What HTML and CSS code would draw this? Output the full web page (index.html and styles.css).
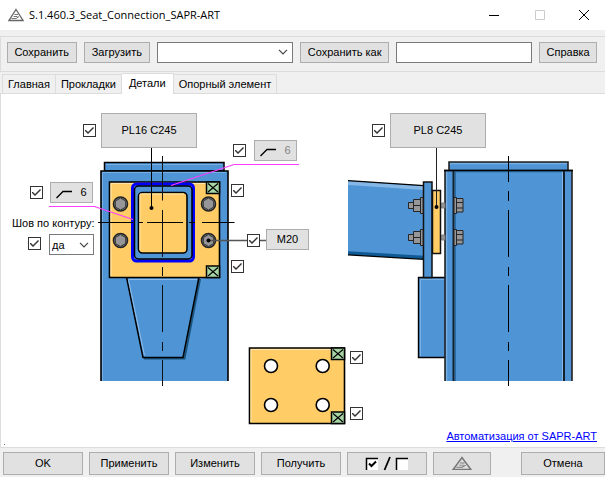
FILE: index.html
```html
<!DOCTYPE html>
<html lang="ru">
<head>
<meta charset="utf-8">
<title>S.1.460.3_Seat_Connection_SAPR-ART</title>
<link rel="stylesheet" href="styles.css">
</head>
<body>
<svg class="defs" aria-hidden="true">
  <symbol id="logo" viewBox="0 0 16 14">
    <path d="M8 1.5 15 12.5H1Z" fill="none" stroke="currentColor" stroke-width="1.3"/>
    <path d="M6.500 6.500H10M9.500 8.500H5.500M3.500 10.500H8L11 8.500" fill="none" stroke="currentColor" stroke-width=".9"/>
  </symbol>
  <symbol id="chevron" viewBox="0 0 10 6">
    <path d="M1 .8 5 4.8 9 .8" fill="none" stroke="currentColor" stroke-width="1.2"/>
  </symbol>
  <symbol id="weld" viewBox="0 0 16 9">
    <path d="M.5 8 7 1.5H16" fill="none" stroke="#000" stroke-width="1.3"/>
  </symbol>
</svg>
<div class="window">
  <header class="titlebar">
    <svg class="logo"><use href="#logo"/></svg>
    <h1 class="title">S.1.460.3_Seat_Connection_SAPR-ART</h1>
    <div class="caption">
      <button class="cap" aria-label="Свернуть"><svg viewBox="0 0 10 10"><path d="M0 5.5H10" stroke="#000"/></svg></button>
      <button class="cap" aria-label="Развернуть" disabled><svg viewBox="0 0 10 10"><path d="M.5.5H9.5V9.5H.5Z" fill="none" stroke="#ccc"/></svg></button>
      <button class="cap" aria-label="Закрыть"><svg viewBox="0 0 10 10"><path d="M0 0 10 10M10 0 0 10" stroke="#000"/></svg></button>
    </div>
  </header>

  <div class="toolbar">
    <button class="btn">Сохранить</button>
    <button class="btn load">Загрузить</button>
    <div class="combo field"><select aria-label="Настройки"><option></option></select><svg><use href="#chevron"/></svg></div>
    <button class="btn wide">Сохранить как</button>
    <input class="field text" type="text" aria-label="Имя файла">
    <button class="btn help">Справка</button>
  </div>

  <nav class="tabs" role="tablist">
    <button class="tab" role="tab">Главная</button>
    <button class="tab" role="tab">Прокладки</button>
    <button class="tab active" role="tab" aria-selected="true">Детали</button>
    <button class="tab" role="tab">Опорный элемент</button>
  </nav>

  <main class="stage">
    <svg class="drawing" viewBox="0 94 605 353" aria-hidden="true">
      <defs>
        <g id="bolt">
          <circle r="7" fill="#858585" stroke="#252525" stroke-width="1.6"/>
          <path d="M0-6 5.2-3V3L0 6-5.2 3V-3Z" fill="#969698" stroke="#333"/>
        </g>
        <g id="mark">
          <path d="M0 0H13V11.500H0Z" fill="#a6d6a6" stroke="#000" stroke-width="1.5"/>
          <path d="M1.500 1.500 11.500 10M11.500 1.500 1.500 10" stroke="#000" stroke-width="1.2"/>
        </g>
        <g id="sidebolt" fill="#969698" stroke="#252525">
          <path d="M408.500-3H414V3H408.500Z"/>
          <path d="M413.500-6H420.500V6H413.500ZM413.500 0H420.500"/>
          <path d="M420.500-8H423V8H420.500Z"/>
          <path d="M441.500-2.500H445V2.500H441.500Z" stroke="#777"/>
          <path d="M454-8H456.500V8H454Z"/>
          <path d="M456.500-7H463V6.500H456.500ZM456.500-3H463M456.500 2.500H463"/>
        </g>
      </defs>

      <!-- front view: column -->
      <path d="M104.500 171V162.500H224V171Z" fill="#4f94d4" stroke="#000" stroke-width="1.5"/>
      <path d="M106 164.500H222" stroke="#79b0e4"/>
      <path d="M101 381V171H228V381" fill="#4f94d4" stroke="#000" stroke-width="1.6"/>
      <path d="M102.500 381V172.500H226" fill="none" stroke="#79b0e4"/>
      <!-- seat bracket -->
      <path d="M200 279 184.500 358.500H144" fill="none" stroke="#1b557f" stroke-width="2"/>
      <path d="M126.500 277 143 357.500H183L199 277" fill="#4f94d4" stroke="#000" stroke-width="1.5"/>
      <path d="M128.500 279.500H197M128.500 280 144.500 355.500" fill="none" stroke="#8fbdea"/>
      <!-- face plate -->
      <path d="M109.500 182H219.500V277.500H109.500Z" fill="#ffcc66" stroke="#000" stroke-width="1.6"/>
      <path d="M111 276V183.500H206" fill="none" stroke="#ffe6b0"/>
      <rect x="132.500" y="184" width="61" height="77" rx="4" fill="#4f94d4" stroke="#00f" stroke-width="3"/>
      <rect x="134.500" y="186" width="57.500" height="73" rx="4" fill="#4f94d4" stroke="#000" stroke-width="1.500"/>
      <rect x="138.500" y="192.500" width="48.500" height="60.500" rx="4" fill="#ffcc66" stroke="#000" stroke-width="1.600"/>
      <path d="M140 250V194H184" fill="none" stroke="#ffe6b0"/>
      <use href="#bolt" x="120.500" y="204"/><use href="#bolt" x="208.500" y="204"/>
      <use href="#bolt" x="120.500" y="240.500"/><use href="#bolt" x="208.500" y="240.500"/>
      <use href="#mark" x="206.500" y="182"/><use href="#mark" x="206.500" y="266"/>
      <!-- axes and leaders -->
      <path d="M162.500 156V200.500M162.500 210V257M162.500 267V276M162.500 285V332M162.500 342V351M162.500 360V386" stroke="#111"/>
      <path d="M98 222.500H133M138 222.500H143M147 222.500H183M189 222.500H195M202 222.500H234.500" stroke="#000"/>
      <path d="M151.500 148V208" stroke="#000"/><circle cx="151.500" cy="208" r="2"/>
      <path d="M208 240.500H267" stroke="#555" stroke-width="1.500"/><circle cx="208.500" cy="240.500" r="2"/>
      <path d="M171 185.500 234 164.500H299M49 206.500H94.500L133 219.500" fill="none" stroke="#ff3cff" stroke-width="1.200"/>

      <!-- loose plate -->
      <path d="M249.500 348H344.500V423.500H249.500Z" fill="#ffcc66" stroke="#000" stroke-width="1.600"/>
      <path d="M251 422V349.500H331" fill="none" stroke="#ffe6b0"/>
      <g fill="#fff" stroke="#000" stroke-width="1.600">
        <circle cx="271" cy="366" r="6.500"/><circle cx="322.700" cy="366" r="6.500"/>
        <circle cx="271" cy="405" r="6.500"/><circle cx="322.700" cy="405" r="6.500"/>
      </g>
      <use href="#mark" x="331.500" y="348"/><use href="#mark" x="331.500" y="412"/>

      <!-- side view: beam -->
      <path d="M348 180.500 424 185.500V259L348 254.500Z" fill="#4f94d4"/>
      <path d="M348 183 424 188" stroke="#84b6e6" stroke-width="4"/>
      <path d="M348 253 424 257.500" stroke="#0f5a94" stroke-width="3.500"/>
      <path d="M348 180.700 424 185.700M348 254.800 424 259.300" stroke="#000" stroke-width="1.200"/>
      <!-- seat block -->
      <path d="M418.500 277.500H446V357.500H418.500Z" fill="#4f94d4" stroke="#000" stroke-width="1.400"/>
      <path d="M420.500 356V279.500H445" fill="none" stroke="#79b0e4"/>
      <!-- column -->
      <path d="M449 171V162H568V171" fill="#4f94d4" stroke="#222" stroke-width="1.600"/>
      <path d="M450 163.700H567" stroke="#84b6e6"/>
      <path d="M445 381V170.500H572V381" fill="#4f94d4" stroke="#222" stroke-width="1.600"/>
      <path d="M444 170.500H573" stroke="#000" stroke-width="1.400"/>
      <path d="M454 171.700H563" stroke="#1b557f"/>
      <path d="M446.700 172V381M562.500 172V381" stroke="#84b6e6"/>
      <path d="M455.500 172V381" stroke="#2a6da6"/>
      <path d="M453.500 171V381M564 171V381" stroke="#14202c" stroke-width="2"/>
      <!-- end plate and shim -->
      <path d="M423.500 277.500V182H432V277.500Z" fill="#4f94d4" stroke="#111" stroke-width="1.500"/>
      <path d="M432.500 190.500H440.500V253.500H432.500Z" fill="#ffcc66" stroke="#111" stroke-width="1.500"/>
      <use href="#sidebolt" y="205.500"/><use href="#sidebolt" y="237.500"/>
      <path d="M436.500 148V207" stroke="#222"/><circle cx="436.500" cy="207" r="2"/>
      <path d="M508.500 156V182M508.500 191V201M508.500 210V257M508.500 267V276M508.500 285V332M508.500 342V351M508.500 360V386" stroke="#000"/>
      <path d="M4 444.500H5" stroke="#777"/>
    </svg>

    <input class="pin check c-pl16" type="checkbox" checked aria-label="PL16 C245">
    <button class="pin btn part b-pl16">PL16 C245</button>
    <input class="pin check c-weld-r" type="checkbox" checked aria-label="Шов 6">
    <button class="pin btn weld b-weld-r" disabled><svg><use href="#weld"/></svg>6</button>
    <input class="pin check c-weld-l" type="checkbox" checked aria-label="Шов 6">
    <button class="pin btn weld b-weld-l"><svg><use href="#weld"/></svg>6</button>
    <label class="pin l-seam" for="seam">Шов по контуру:</label>
    <input class="pin check c-seam" type="checkbox" checked aria-label="Шов по контуру">
    <div class="pin combo field s-seam"><select id="seam"><option>да</option><option>нет</option></select><svg><use href="#chevron"/></svg></div>
    <input class="pin check c-top" type="checkbox" checked aria-label="Верхний угол">
    <input class="pin check c-m20" type="checkbox" checked aria-label="M20">
    <button class="pin btn small b-m20">M20</button>
    <input class="pin check c-bottom" type="checkbox" checked aria-label="Нижний угол">
    <input class="pin check c-pl8" type="checkbox" checked aria-label="PL8 C245">
    <button class="pin btn part b-pl8">PL8 C245</button>
    <input class="pin check c-plate-t" type="checkbox" checked aria-label="Верхний угол прокладки">
    <input class="pin check c-plate-b" type="checkbox" checked aria-label="Нижний угол прокладки">
    <a class="link" href="#">Автоматизация от SAPR-ART</a>
  </main>

  <footer class="actions">
    <button class="btn">OK</button>
    <button class="btn">Применить</button>
    <button class="btn">Изменить</button>
    <button class="btn">Получить</button>
    <button class="btn" aria-label="Переключить флажки">
      <svg class="toggle" viewBox="0 0 44 15">
        <path d="M2 3H13V14H2Z" fill="#fff"/><path d="M1.500 14V2.500H13" fill="none" stroke="#000" stroke-width="1.500"/>
        <path d="M4 7.500 6.500 10 11 5.500" fill="none" stroke="#000" stroke-width="2"/>
        <path d="M19.500 14 25 1" stroke="#000" stroke-width="1.800"/>
        <path d="M32 3H43V14H32Z" fill="#fff"/><path d="M31.500 14V2.500H43" fill="none" stroke="#000" stroke-width="1.500"/>
      </svg>
    </button>
    <button class="btn brand" aria-label="SAPR-ART"><svg viewBox="0 0 16 14" preserveAspectRatio="none"><use href="#logo"/></svg></button>
    <button class="btn cancel">Отмена</button>
  </footer>
</div>
</body>
</html>
```

FILE: styles.css
```css
* { box-sizing: border-box; }

body {
  margin: 0;
  background: #f0f0f0;
  color: #000;
  font: 11px/14px "Liberation Sans", Arial, sans-serif;
}

button, input, select { font: inherit; color: inherit; }

.defs { position: absolute; width: 0; height: 0; }

.window {
  display: flex;
  flex-direction: column;
  min-height: 100vh;
}

/* Title bar */
.titlebar {
  display: flex;
  align-items: center;
  height: 30px;
  padding-left: 8px;
  background: #fff;
}
.logo { width: 16px; height: 14px; color: #666; }
.title {
  flex: 1;
  margin: 0 0 0 5px;
  font: 11px/16px "Open Sans", "Segoe UI", sans-serif;
}
.caption { display: flex; }
.cap {
  display: grid;
  place-items: center;
  width: 46px;
  height: 28px;
  padding: 0;
  border: 0;
  background: none;
}
.cap:last-child { width: 42px; }
.cap svg { width: 10px; height: 10px; }

/* Shared controls */
.btn {
  display: flex;
  align-items: center;
  justify-content: center;
  height: 21px;
  padding: 0 0 1px;
  border: 1px solid #adadad;
  background: #e1e1e1;
  white-space: nowrap;
}
.btn:disabled { color: #838383; }
.field {
  height: 21px;
  border: 1px solid #7a7a7a;
  background: #fff;
}
.combo { display: flex; align-items: center; position: relative; }
.combo select {
  appearance: none;
  width: 100%;
  height: 100%;
  padding: 0 16px 0 2px;
  border: 0;
  background: none;
}
.combo svg {
  position: absolute;
  right: 4px;
  width: 10px;
  height: 6px;
  color: #444;
  pointer-events: none;
}
.check {
  appearance: none;
  width: 13px;
  height: 13px;
  margin: 0;
  border: 1px solid #333;
  background: #fff;
}
.check:checked::before {
  content: "";
  display: block;
  width: 11px;
  height: 11px;
  background: #333;
  clip-path: polygon(1px 5px, 2px 5px, 4px 7px, 9px 2px, 10px 3px, 4px 9px, 1px 6px);
}

/* Toolbar */
.toolbar {
  display: flex;
  align-items: center;
  gap: 7px;
  height: 36px;
  margin-top: 6px;
  padding: 0 8px 4px 6px;
  border: 1px solid #dcdcdc;
  border-right: 0;
}
.toolbar .btn { flex: 69 1 0; }
.toolbar .field { flex: 137 1 0; min-width: 0; padding: 0; }
.toolbar .load { flex-grow: 66; }
.toolbar .wide { flex-grow: 89; }
.toolbar .help { flex-grow: 57; }

/* Tabs */
.tabs {
  display: flex;
  align-items: flex-end;
  height: 22px;
  padding-left: 2px;
  border-bottom: 1px solid #dcdcdc;
}
.tab {
  height: 19px;
  padding: 0 5px;
  border: 1px solid #dcdcdc;
  border-width: 1px 1px 0 0;
  background: #f0f0f0;
}
.tab:first-child { border-left-width: 1px; }
.tab.active {
  height: 21px;
  margin-bottom: -1px;
  padding: 0 7px 2px;
  background: #fff;
}

/* Drawing sheet */
.stage {
  position: relative;
  flex: 1;
  border-bottom: 1px solid #dcdcdc;
  background: #fff;
  box-shadow: inset 1px 0 #dcdcdc;
}
.drawing { display: block; width: 605px; height: 353px; }
.pin { position: absolute; }
.part { width: 96px; height: 35px; }
.weld { gap: 8px; width: 43px; }
.weld svg { width: 16px; height: 9px; margin-top: 5px; }
.small { width: 43px; }

.c-pl16 { left: 83px; top: 30px; }
.b-pl16 { left: 101px; top: 19px; }
.c-weld-r { left: 233px; top: 50px; }
.b-weld-r { left: 254px; top: 46px; }
.c-weld-l { left: 30px; top: 92px; }
.b-weld-l { left: 50px; top: 88px; }
.l-seam { left: 12px; top: 122px; }
.c-seam { left: 28px; top: 143px; }
.s-seam { left: 49px; top: 140px; width: 45px; }
.c-top { left: 231px; top: 90px; }
.c-m20 { left: 247px; top: 140px; }
.b-m20 { left: 266px; top: 135px; }
.c-bottom { left: 231px; top: 166px; }
.c-pl8 { left: 372px; top: 30px; }
.b-pl8 { left: 390px; top: 19px; }
.c-plate-t { left: 350px; top: 257px; }
.c-plate-b { left: 350px; top: 313px; }
.link {
  position: absolute;
  right: 8px;
  bottom: 4px;
  color: #00f;
}

/* Footer */
.actions {
  display: flex;
  gap: 6px;
  padding: 4px 0 2px 3px;
}
.actions .btn { flex: 0 1 80px; height: 23px; }
.actions .brand { flex-basis: 58px; }
.actions .cancel { flex-basis: 84px; margin-left: auto; }
.toggle { width: 44px; height: 15px; }
.brand svg { width: 20px; height: 15px; color: #777; }
```
